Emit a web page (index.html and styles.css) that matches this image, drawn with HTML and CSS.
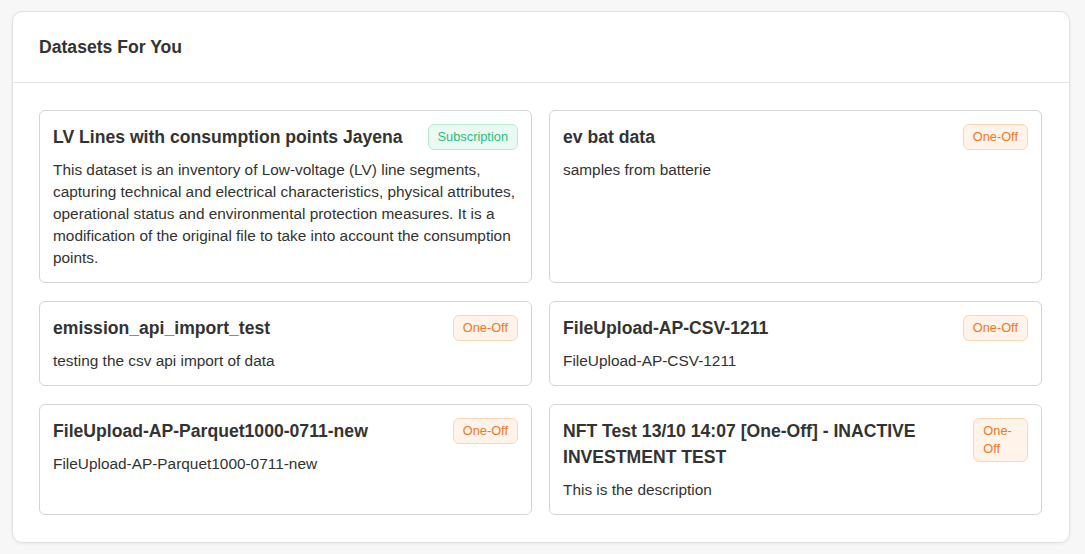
FILE: index.html
```html
<!DOCTYPE html>
<html lang="en">
<head>
    <meta charset="UTF-8">
    <meta name="viewport" content="width=device-width, initial-scale=1.0">
    <title>Datasets For You</title>
    <link rel="stylesheet" href="styles.css">
</head>
<body>
    <div class="panel">
        <!-- Cabeçalho -->
        <div class="panel-header">
            <h2>Datasets For You</h2>
        </div>

        <!-- Lista de datasets -->
        <div class="panel-body">
            <div class="dataset-grid">
                <div class="dataset-card">
                    <div class="dataset-top">
                        <h3>LV Lines with consumption points Jayena</h3>
                        <span class="badge subscription">Subscription</span>
                    </div>
                    <p>This dataset is an inventory of Low-voltage (LV) line segments, capturing technical and electrical characteristics, physical attributes, operational status and environmental protection measures. It is a modification of the original file to take into account the consumption points.</p>
                </div>

                <div class="dataset-card">
                    <div class="dataset-top">
                        <h3>ev bat data</h3>
                        <span class="badge one-off">One-Off</span>
                    </div>
                    <p>samples from batterie</p>
                </div>

                <div class="dataset-card">
                    <div class="dataset-top">
                        <h3>emission_api_import_test</h3>
                        <span class="badge one-off">One-Off</span>
                    </div>
                    <p>testing the csv api import of data</p>
                </div>

                <div class="dataset-card">
                    <div class="dataset-top">
                        <h3>FileUpload-AP-CSV-1211</h3>
                        <span class="badge one-off">One-Off</span>
                    </div>
                    <p>FileUpload-AP-CSV-1211</p>
                </div>

                <div class="dataset-card">
                    <div class="dataset-top">
                        <h3>FileUpload-AP-Parquet1000-0711-new</h3>
                        <span class="badge one-off">One-Off</span>
                    </div>
                    <p>FileUpload-AP-Parquet1000-0711-new</p>
                </div>

                <div class="dataset-card">
                    <div class="dataset-top">
                        <h3>NFT Test 13/10 14:07 [One-Off] - INACTIVE INVESTMENT TEST</h3>
                        <span class="badge one-off">One-Off</span>
                    </div>
                    <p>This is the description</p>
                </div>
            </div>
        </div>
    </div>
</body>
</html>
```

FILE: styles.css
```css
/* Reset básico */
* {
    margin: 0;
    padding: 0;
    box-sizing: border-box;
}

body {
    font-family: 'Liberation Sans', Arial, sans-serif;
    background: #f7f7f7;
    color: #333;
    padding: 11px 15px 11px 12px;
}

.panel {
    background: #fff;
    border: 1px solid #e0e0e0;
    border-radius: 10px;
    box-shadow: 0 1px 3px rgba(0, 0, 0, 0.06);
}

.panel-header {
    height: 71px;
    display: flex;
    align-items: center;
    padding: 0 26px;
    border-bottom: 1px solid #e3e3e3;
}

.panel-header h2 {
    font-size: 17.6px;
    font-weight: bold;
    color: #333;
}

.panel-body {
    padding: 27px 27px 27px 26px;
}

.dataset-grid {
    display: grid;
    grid-template-columns: 1fr 1fr;
    column-gap: 17px;
    row-gap: 18px;
}

.dataset-card {
    border: 1px solid #d4d4d4;
    border-radius: 6px;
    padding: 13px;
}

.dataset-top {
    display: flex;
    justify-content: space-between;
    align-items: flex-start;
    gap: 12px;
}

.dataset-top h3 {
    font-size: 17.6px;
    line-height: 26px;
    font-weight: bold;
    color: #333;
}

.dataset-card p {
    margin-top: 9px;
    font-size: 15.4px;
    line-height: 22px;
    color: #333;
}

.badge {
    font-size: 12.8px;
    line-height: 18px;
    padding: 3px 9px;
    border-radius: 6px;
    border: 1px solid;
}

.badge.subscription {
    background: #eafaf2;
    border-color: #b5ecd2;
    color: #1fbf7c;
}

.badge.one-off {
    background: #fff3ea;
    border-color: #fdd5b4;
    color: #f57621;
}
```
